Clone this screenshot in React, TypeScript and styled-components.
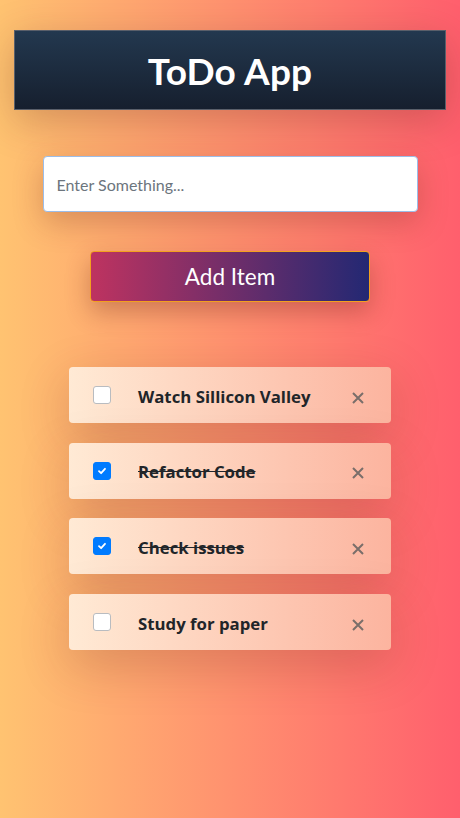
import React, { useState } from "react";
import styled, { createGlobalStyle } from "styled-components";

const Global = createGlobalStyle`
  html, body { margin: 0; padding: 0; }
  body { font-family: Lato, "Open Sans", sans-serif; }
  * { box-sizing: border-box; }
`;

const Page = styled.div`
  min-height: 818px;
  background: linear-gradient(90deg, #ffc371 0%, #ff5f6d 100%);
  display: flex;
  flex-direction: column;
  align-items: center;
  padding: 30px 14px 0;
  overflow: hidden;
`;

const Header = styled.header`
  width: 100%;
  height: 80px;
  background: linear-gradient(180deg, #23384f 0%, #161f2e 100%);
  border: 1px solid #5a5f6a;
  display: flex;
  align-items: center;
  justify-content: center;
  box-shadow: 0 10px 40px rgba(80, 30, 20, 0.25);
`;

const Title = styled.h1`
  margin: 0;
  color: #fff;
  font-size: 37px;
  font-weight: 700;
  letter-spacing: 0.2px;
`;

const Input = styled.input`
  margin-top: 46px;
  width: 375px;
  height: 56px;
  border: 1px solid #9cbde8;
  border-radius: 4px;
  background: #fff;
  padding: 0 13px;
  font-family: Lato, "Open Sans", sans-serif;
  font-size: 16px;
  color: #333;
  outline: none;
  box-shadow: 0 10px 30px rgba(100, 30, 20, 0.25);
  &::placeholder { color: #6c757d; }
`;

const AddButton = styled.button`
  margin-top: 39px;
  width: 280px;
  height: 51px;
  border: 1px solid #f2a01f;
  border-radius: 4px;
  background: linear-gradient(90deg, #be3360 0%, #232873 100%);
  color: #fff;
  font-family: Lato, "Open Sans", sans-serif;
  font-size: 22.5px;
  cursor: pointer;
  box-shadow: 0 10px 25px rgba(100, 30, 20, 0.3);
`;

const List = styled.ul`
  list-style: none;
  margin: 65px 0 0;
  padding: 0;
  display: flex;
  flex-direction: column;
  gap: 19.7px;
`;

const Item = styled.li`
  width: 322px;
  height: 56px;
  border-radius: 4px;
  background: linear-gradient(90deg, #ffead5 0%, #fcb49f 100%);
  display: flex;
  align-items: center;
  padding: 0 26px 0 24px;
  box-shadow: 0 15px 50px rgba(90, 30, 20, 0.22);
`;

const Box = styled.span<{ $checked: boolean }>`
  width: 18px;
  height: 18px;
  flex: none;
  border-radius: 3px;
  border: 1px solid ${(p) => (p.$checked ? "#007bff" : "#b9bcc0")};
  background: ${(p) => (p.$checked ? "#007bff" : "#fff")};
  display: flex;
  align-items: center;
  justify-content: center;
  cursor: pointer;
`;

const Label = styled.span<{ $done: boolean }>`
  margin-left: 27px;
  margin-top: 2px;
  flex: 1;
  font-family: "Open Sans", Lato, sans-serif;
  font-size: 16.8px;
  font-weight: 700;
  color: #212529;
  text-decoration: ${(p) => (p.$done ? "line-through" : "none")};
`;

const Remove = styled.button`
  border: none;
  background: none;
  padding: 0;
  margin-top: 5px;
  width: 14px;
  height: 14px;
  display: flex;
  cursor: pointer;
`;

const initial = [
  { text: "Watch Sillicon Valley", done: false },
  { text: "Refactor Code", done: true },
  { text: "Check issues", done: true },
  { text: "Study for paper", done: false },
];

export default function App() {
  const [items, setItems] = useState(initial);
  const [value, setValue] = useState("");
  return (
    <Page>
      <Global />
      <Header>
        <Title>ToDo App</Title>
      </Header>
      <Input
        placeholder="Enter Something..."
        value={value}
        onChange={(e) => setValue(e.target.value)}
      />
      <AddButton
        onClick={() => {
          if (value.trim()) {
            setItems([...items, { text: value, done: false }]);
            setValue("");
          }
        }}
      >
        Add Item
      </AddButton>
      <List>
        {items.map((it, i) => (
          <Item key={i}>
            <Box
              $checked={it.done}
              onClick={() =>
                setItems(items.map((x, j) => (j === i ? { ...x, done: !x.done } : x)))
              }
            >
              {it.done && (
                <svg width="10" height="10" viewBox="0 0 10 10">
                  <path d="M2 5.2 L4.1 7.2 L8 2.8" fill="none" stroke="#fff" strokeWidth="1.8" strokeLinecap="round" strokeLinejoin="round" />
                </svg>
              )}
            </Box>
            <Label $done={it.done}>{it.text}</Label>
            <Remove onClick={() => setItems(items.filter((_, j) => j !== i))}>
              <svg width="14" height="14" viewBox="0 0 14 14">
                <path d="M2 2 L12 12 M12 2 L2 12" stroke="#7a6e6a" strokeWidth="2" />
              </svg>
            </Remove>
          </Item>
        ))}
      </List>
    </Page>
  );
}
